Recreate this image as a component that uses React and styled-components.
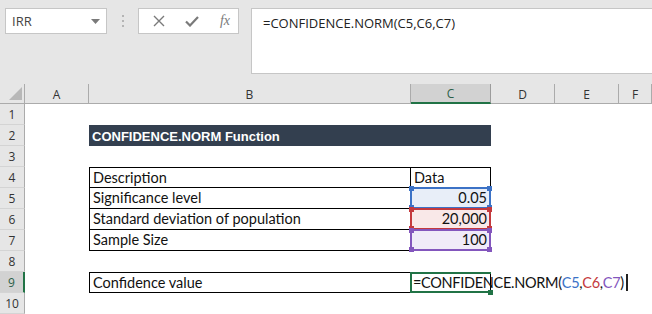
import React from "react";
import styled, { createGlobalStyle, css } from "styled-components";

const GlobalStyle = createGlobalStyle`
  html, body {
    margin: 0;
    padding: 0;
    background: #ffffff;
    overflow: hidden;
  }
  * { box-sizing: border-box; }
`;

const CELL_FONT = `"Lato", "Open Sans", sans-serif`;
const UI_FONT = `"Open Sans", "Noto Sans", sans-serif`;

const REF = {
  blue: { line: "#3c72c6", fill: "#e8eef8" },
  red: { line: "#c4393d", fill: "#f9e8e8" },
  purple: { line: "#8356bd", fill: "#f0ebf8" },
};

const rows = [
  { n: 1 },
  { n: 2, title: "CONFIDENCE.NORM Function" },
  { n: 3 },
  { n: 4, label: "Description", value: "Data", head: true, top: true },
  { n: 5, label: "Significance level", value: "0.05", ref: "blue" },
  { n: 6, label: "Standard deviation of population", value: "20,000", ref: "red" },
  { n: 7, label: "Sample Size", value: "100", ref: "purple" },
  { n: 8 },
  { n: 9, label: "Confidence value", active: true, top: true },
  { n: 10 },
];

const columns = ["A", "B", "C", "D", "E", "F"];

const Dots = () => (
  <DotsWrap>
    <svg width="4" height="12" viewBox="0 0 4 12">
      <rect x="1" y="0" width="2" height="2" fill="#b4b4b4" />
      <rect x="1" y="5" width="2" height="2" fill="#b4b4b4" />
      <rect x="1" y="10" width="2" height="2" fill="#b4b4b4" />
    </svg>
  </DotsWrap>
);

const Toolbar = () => (
  <TopBar>
    <NameBox>
      <span>IRR</span>
      <svg width="9" height="5" viewBox="0 0 9 5">
        <path d="M0 0 L9 0 L4.5 5 Z" fill="#7a7a7a" />
      </svg>
    </NameBox>
    <Dots />
    <FxButtons>
      <svg width="12" height="12" viewBox="0 0 12 12">
        <path d="M1 1 L11 11 M11 1 L1 11" stroke="#7a7a7a" strokeWidth="1.4" />
      </svg>
      <svg width="14" height="11" viewBox="0 0 14 11">
        <path d="M1 5.5 L5 9.5 L13 1" stroke="#7a7a7a" strokeWidth="2.2" fill="none" />
      </svg>
      <FxText>fx</FxText>
    </FxButtons>
    <FormulaBox>=CONFIDENCE.NORM(C5,C6,C7)</FormulaBox>
  </TopBar>
);

const FormulaCell = () => (
  <ActiveText>
    =CONFIDENCE.NORM(
    <RefText $color={REF.blue.line}>C5</RefText>,
    <RefText $color={REF.red.line}>C6</RefText>,
    <RefText $color={REF.purple.line}>C7</RefText>)
    <Caret />
  </ActiveText>
);

const SheetRow = ({ row }) => {
  const boxed = row.label !== undefined;
  return (
    <>
      <RowHead $active={row.active}>{row.n}</RowHead>
      <Cell />
      <Cell $band={!!row.title} $boxed={boxed} $top={row.top} $left>
        {row.title ? <Title>{row.title}</Title> : row.label}
      </Cell>
      <Cell
        $band={!!row.title}
        $boxed={boxed}
        $top={row.top}
        $align={row.head ? "left" : "right"}
        $ref={row.ref}
        $active={row.active}
      >
        {row.active ? <FormulaCell /> : row.value}
      </Cell>
      <Cell />
      <Cell />
      <Cell />
    </>
  );
};

const App = () => (
  <>
    <GlobalStyle />
    <Page>
      <Toolbar />
      <Sheet>
        <Corner>
          <svg width="13" height="13" viewBox="0 0 13 13">
            <path d="M13 0 L13 13 L0 13 Z" fill="#b8b8b8" />
          </svg>
        </Corner>
        {columns.map((c) => (
          <ColHead key={c} $active={c === "C"}>{c}</ColHead>
        ))}
        {rows.map((r) => (
          <SheetRow key={r.n} row={r} />
        ))}
      </Sheet>
    </Page>
  </>
);

const Page = styled.div`
  width: 652px;
  height: 314px;
  overflow: hidden;
  background: #ffffff;
`;

const TopBar = styled.div`
  height: 84px;
  background: #e6e6e6;
  display: flex;
  align-items: flex-start;
  padding: 8px 0 0 5px;
`;

const NameBox = styled.div`
  width: 102px;
  height: 26px;
  background: #ffffff;
  border: 1px solid #c6c6c6;
  display: flex;
  align-items: center;
  justify-content: space-between;
  padding: 0 6px 0 6px;
  font-family: ${UI_FONT};
  font-size: 13px;
  color: #444444;
`;

const DotsWrap = styled.div`
  width: 31px;
  height: 26px;
  display: flex;
  align-items: center;
  justify-content: center;
`;

const FxButtons = styled.div`
  width: 101px;
  height: 26px;
  background: #ffffff;
  border: 1px solid #c6c6c6;
  display: flex;
  align-items: center;
  justify-content: space-between;
  padding: 0 8px 0 14px;
`;

const FxText = styled.span`
  font-family: "Liberation Serif", serif;
  font-style: italic;
  font-size: 14px;
  color: #7a7a7a;
  line-height: 1;
`;

const FormulaBox = styled.div`
  margin-left: 12px;
  flex: 1;
  height: 66px;
  background: #ffffff;
  border: 1px solid #c6c6c6;
  border-right: none;
  padding: 5px 0 0 11px;
  font-family: ${UI_FONT};
  font-size: 13px;
  color: #222222;
`;

const Sheet = styled.div`
  display: grid;
  grid-template-columns: 25px 64px 322px 80px 64px 64px 1fr;
  grid-template-rows: 20px repeat(10, 21px);
  background: #ffffff;
`;

const headBase = css`
  background: #e6e6e6;
  font-family: ${UI_FONT};
  font-size: 12px;
  color: #333333;
  display: flex;
  align-items: center;
  justify-content: center;
`;

const Corner = styled.div`
  ${headBase};
  border-right: 1px solid #ababab;
  border-bottom: 1px solid #ababab;
  align-items: flex-end;
  justify-content: flex-end;
  padding: 0 2px 3px 0;
`;

const ColHead = styled.div`
  ${headBase};
  border-right: 1px solid #ababab;
  border-bottom: 1px solid #ababab;
  padding-top: 1px;
  ${(p) =>
    p.$active &&
    css`
      background: #d2d2d2;
      color: #2c5f48;
      border-bottom: 2px solid #217346;
      border-right-color: #9c9c9c;
    `}
`;

const RowHead = styled.div`
  ${headBase};
  border-right: 1px solid #ababab;
  border-bottom: 1px solid #d4d4d4;
  ${(p) =>
    p.$active &&
    css`
      background: #d2d2d2;
      color: #2c5f48;
      border-right: 2px solid #217346;
    `}
`;

const Cell = styled.div`
  position: relative;
  height: 21px;
  line-height: 21px;
  padding: 0 3px;
  font-family: ${CELL_FONT};
  font-size: 14.5px;
  color: #111111;
  white-space: nowrap;
  text-align: ${(p) => p.$align || "left"};
  ${(p) => p.$band && css`background: #333f4f;`}
  ${(p) =>
    p.$boxed &&
    css`
      border-right: 1px solid #000000;
      border-bottom: 1px solid #000000;
      ${p.$top && "border-top: 1px solid #000000;"}
      ${p.$left && "border-left: 1px solid #000000;"}
      line-height: ${p.$top ? 19 : 20}px;
    `}
  ${(p) =>
    p.$ref &&
    css`
      background: ${REF[p.$ref].fill};
      &::before {
        content: "";
        position: absolute;
        top: -1px;
        left: -1px;
        right: -1px;
        bottom: -1px;
        border: 2px solid ${REF[p.$ref].line};
      }
      &::after {
        content: "";
        position: absolute;
        top: -2px;
        left: -2px;
        right: -2px;
        bottom: -2px;
        background:
          linear-gradient(${REF[p.$ref].line}, ${REF[p.$ref].line}) top left / 5px 5px no-repeat,
          linear-gradient(${REF[p.$ref].line}, ${REF[p.$ref].line}) top right / 5px 5px no-repeat,
          linear-gradient(${REF[p.$ref].line}, ${REF[p.$ref].line}) bottom left / 5px 5px no-repeat,
          linear-gradient(${REF[p.$ref].line}, ${REF[p.$ref].line}) bottom right / 5px 5px no-repeat;
      }
    `}
  ${(p) =>
    p.$active &&
    css`
      overflow: visible;
      text-align: left;
      padding: 0 0 0 2px;
      z-index: 2;
      &::before {
        content: "";
        position: absolute;
        top: -1px;
        left: -1px;
        right: -1px;
        bottom: -1px;
        border: 2px solid #217346;
        border-right: none;
      }
      &::after {
        content: "";
        position: absolute;
        right: -3px;
        bottom: -3px;
        width: 5px;
        height: 5px;
        background: #217346;
      }
    `}
`;

const Title = styled.span`
  font-family: "Liberation Sans", Arial, sans-serif;
  font-weight: bold;
  font-size: 13px;
  color: #ffffff;
`;

const ActiveText = styled.span`
  position: relative;
  z-index: 3;
  display: inline-flex;
  align-items: center;
  height: 19px;
  letter-spacing: -0.3px;
`;

const RefText = styled.span`
  color: ${(p) => p.$color};
`;

const Caret = styled.span`
  display: inline-block;
  width: 2px;
  height: 17px;
  margin-left: 2px;
  background: #222222;
`;

export default App;
